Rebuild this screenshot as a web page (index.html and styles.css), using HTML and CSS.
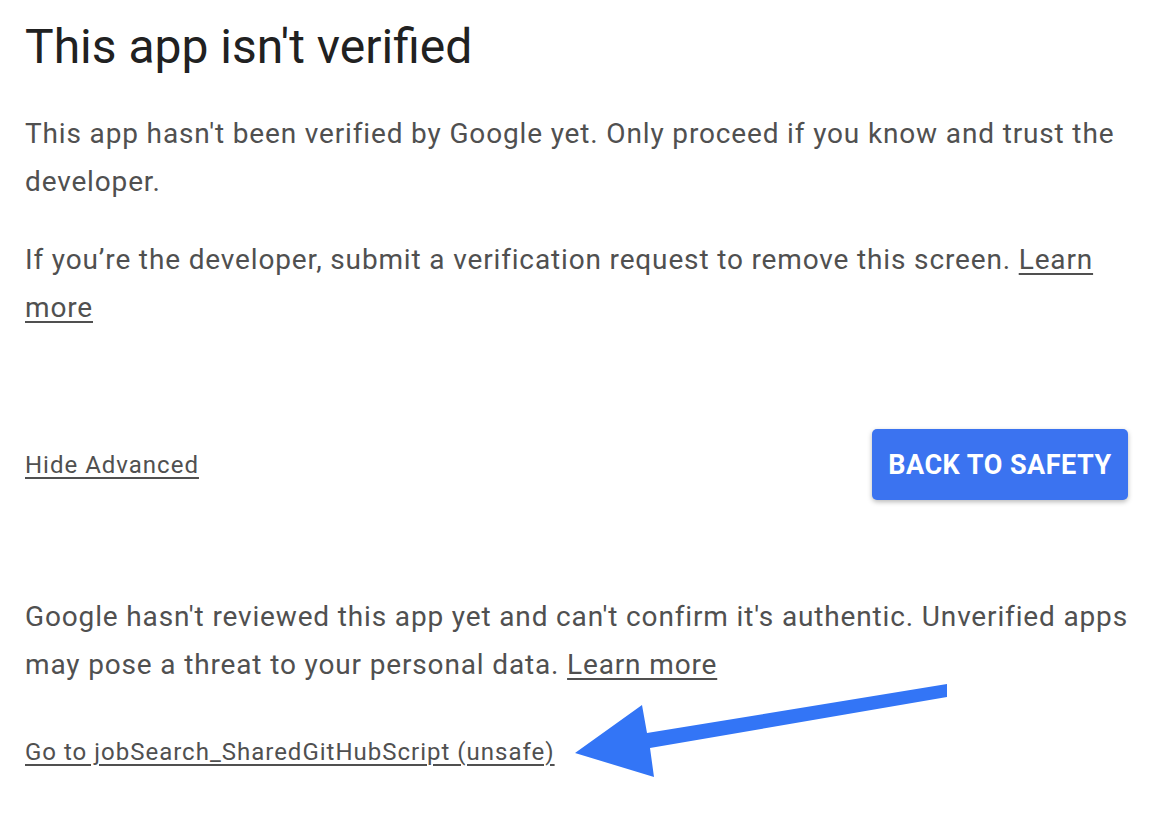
FILE: index.html
```html
<!DOCTYPE html>
<html lang="en">
<head>
<meta charset="utf-8">
<title>This app isn't verified</title>
<link rel="stylesheet" href="styles.css">
</head>
<body>
<main class="page">
  <h1 class="title">This app isn't verified</h1>
  <p class="text">This app hasn't been verified by Google yet. Only proceed if you know and trust the developer.</p>
  <p class="text dev">If you’re the developer, submit a verification request to remove this screen. <a class="link" href="#">Learn more</a></p>
  <div class="actions">
    <a class="small-link" href="#">Hide Advanced</a>
    <button class="btn" type="button">BACK TO SAFETY</button>
  </div>
  <p class="text warn">Google hasn't reviewed this app yet and can't confirm it's authentic. Unverified apps may pose a threat to your personal data. <a class="link" href="#">Learn more</a></p>
  <a class="small-link go" href="#">Go to jobSearch_SharedGitHubScript (unsafe)</a>
</main>
<svg class="arrow" width="1156" height="832" viewBox="0 0 1156 832" aria-hidden="true">
  <polygon points="947,684 947,697 650,748 654,777 575,753 642,705 647,733" fill="#3375f6"/>
</svg>
</body>
</html>
```
FILE: styles.css
```css
html, body {
  margin: 0;
  padding: 0;
  background: #ffffff;
}
body {
  font-family: Roboto, "Noto Sans", Arial, sans-serif;
  width: 1156px;
  height: 832px;
  overflow: hidden;
  position: relative;
}
.page {
  padding: 19px 20px 0 25px;
  display: flex;
  flex-direction: column;
}
.title {
  margin: 0;
  font-size: 48px;
  line-height: 56px;
  font-weight: 400;
  color: #212121;
}
.text {
  margin: 35px 0 0;
  font-size: 28px;
  line-height: 48px;
  letter-spacing: 0.85px;
  color: #505050;
}
.dev {
  margin-top: 30px;
}
.link {
  color: #505050;
  text-decoration: underline;
  text-underline-offset: 4px;
  text-decoration-thickness: 2px;
}
.actions {
  margin-top: 97px;
  display: flex;
  justify-content: space-between;
  align-items: center;
}
.small-link {
  font-size: 24px;
  line-height: 32px;
  letter-spacing: 1px;
  color: #505050;
  text-decoration: underline;
  text-underline-offset: 4px;
  text-decoration-thickness: 2px;
  align-self: flex-start;
}
.actions .small-link {
  align-self: center;
}
.btn {
  width: 256px;
  height: 71px;
  margin-right: 8px;
  border: none;
  border-radius: 5px;
  background: #3b73f0;
  color: #ffffff;
  font-family: Roboto, "Noto Sans", Arial, sans-serif;
  font-size: 27px;
  letter-spacing: 0.5px;
  font-weight: 700;
  padding: 0;
  box-shadow: 0 2px 5px rgba(0, 0, 0, 0.28);
}
.warn {
  margin-top: 93px;
}
.go {
  margin-top: 47px;
}
.arrow {
  position: absolute;
  left: 0;
  top: 0;
  pointer-events: none;
}
```
